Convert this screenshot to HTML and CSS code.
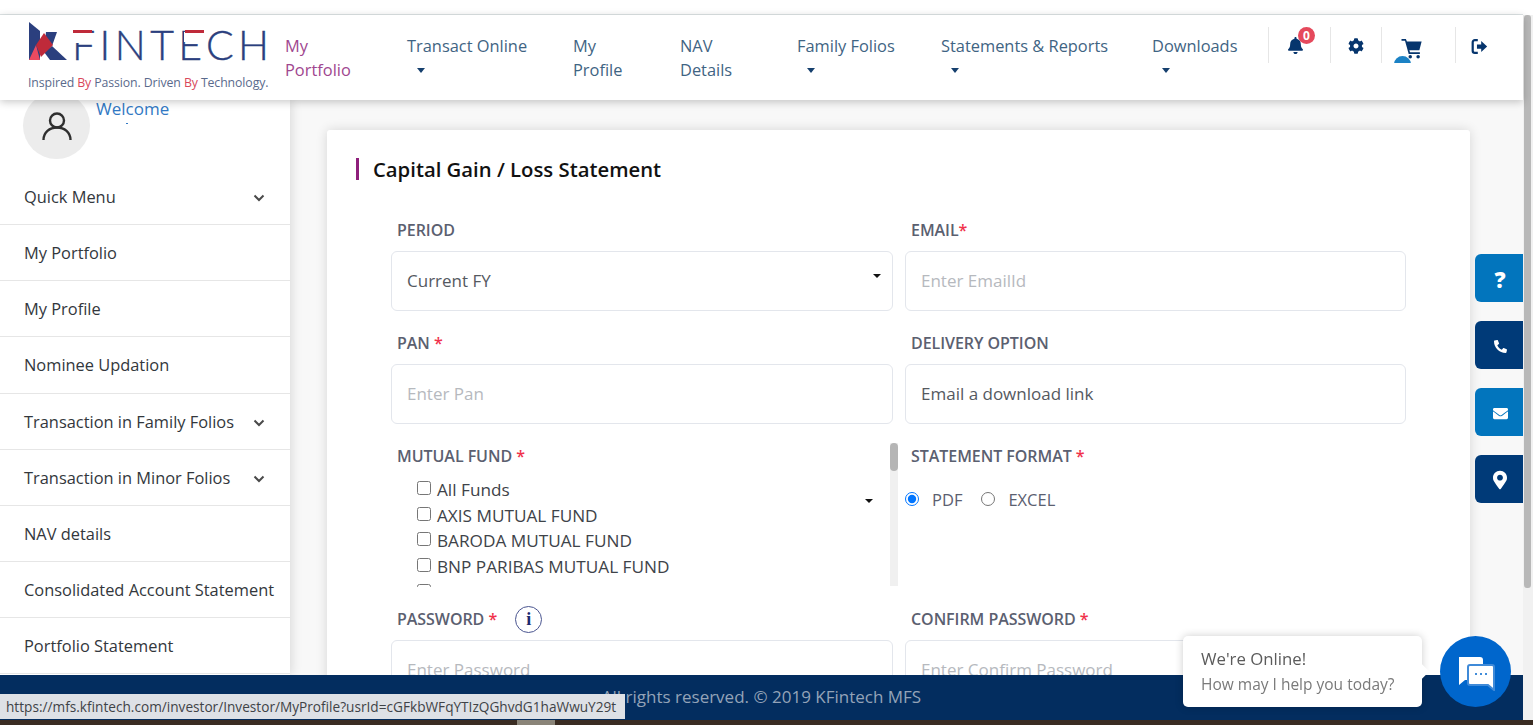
FILE: index.html
```html
<!DOCTYPE html>
<html lang="en">
<head>
    <meta charset="UTF-8">
    <title>Capital Gain / Loss Statement</title>
    <link rel="stylesheet" href="styles.css">
</head>
<body>
<div class="page">
    <div class="app">
        <div class="top-strip"></div>

        <header class="header">
            <div class="logo">
                <svg class="logo-mark" viewBox="0 0 245 42" width="245" height="42">
                    <polygon points="2,0 13,9 13,38 2,38" fill="#2b3f7e"/>
                    <polygon points="19,10 30,10 25,24 17,30" fill="#2b3f7e"/>
                    <polygon points="25,24 40,38 23,38 17,30" fill="#2b3f7e"/>
                    <polygon points="2,38 13,38 9,23" fill="#ec4a60"/>
                    <polygon points="17,11 26,23 14,35 9,23" fill="#bf2a3a"/>
                    <text class="logo-word" x="45" y="38" textLength="197" lengthAdjust="spacing">FINTECH</text>
                    <rect class="logo-mask" x="45" y="10" width="20" height="11"/>
                    <rect class="logo-mask" x="157" y="10" width="20" height="10"/>
                    <rect x="46" y="8" width="19" height="3" fill="#bf2a3a"/>
                    <rect x="158" y="8" width="19" height="3" fill="#bf2a3a"/>
                </svg>
                <div class="tagline">Inspired <em>By</em> Passion. Driven <em>By</em> Technology.</div>
            </div>

            <nav class="nav">
                <div class="nav-item nav-short active">My Portfolio</div>
                <div class="nav-item">Transact Online<span class="caret"></span></div>
                <div class="nav-item nav-short">My Profile</div>
                <div class="nav-item nav-short">NAV Details</div>
                <div class="nav-item">Family Folios<span class="caret"></span></div>
                <div class="nav-item">Statements &amp; Reports<span class="caret"></span></div>
                <div class="nav-item">Downloads<span class="caret"></span></div>
            </nav>

            <div class="tools">
                <div class="tool tool-bell">
                    <svg class="icon-bell" viewBox="0 0 448 512"><path d="M224 512c35.32 0 63.97-28.65 63.97-64H160.03c0 35.35 28.65 64 63.97 64zm215.39-149.71c-19.32-20.76-55.47-51.99-55.47-154.29 0-77.7-54.48-139.9-127.94-155.16V32c0-17.67-14.32-32-31.98-32s-31.98 14.33-31.98 32v20.84C118.56 68.1 64.08 130.3 64.08 208c0 102.3-36.15 133.53-55.47 154.29-6 6.45-8.66 14.16-8.61 21.71.11 16.4 12.98 32 32.1 32h383.8c19.12 0 32-15.6 32.1-32 .05-7.55-2.61-15.27-8.61-21.71z"/></svg>
                    <span class="bell-badge">0</span>
                </div>
                <div class="tool tool-cog">
                    <svg class="icon-cog" viewBox="0 0 512 512"><path d="M487.4 315.7l-42.6-24.6c4.3-23.2 4.3-47 0-70.2l42.6-24.6c4.9-2.8 7.1-8.6 5.5-14-11.1-35.6-30-67.8-54.7-94.6-3.8-4.1-10-5.1-14.8-2.3L380.8 110c-17.9-15.4-38.5-27.3-60.8-35.1V25.8c0-5.6-3.9-10.5-9.4-11.7-36.7-8.2-74.3-7.8-109.2 0-5.5 1.2-9.4 6.1-9.4 11.7V75c-22.2 7.9-42.8 19.8-60.8 35.1L88.7 85.5c-4.9-2.8-11-1.9-14.8 2.3-24.7 26.7-43.6 58.9-54.7 94.6-1.7 5.4.6 11.2 5.5 14L67.3 221c-4.3 23.2-4.3 47 0 70.2l-42.6 24.6c-4.9 2.8-7.1 8.6-5.5 14 11.1 35.6 30 67.8 54.7 94.6 3.8 4.1 10 5.1 14.8 2.3l42.6-24.6c17.9 15.4 38.5 27.3 60.8 35.1v49.2c0 5.6 3.9 10.5 9.4 11.7 36.7 8.2 74.3 7.8 109.2 0 5.5-1.2 9.4-6.1 9.4-11.7v-49.2c22.2-7.9 42.8-19.8 60.8-35.1l42.6 24.6c4.9 2.8 11 1.9 14.8-2.3 24.7-26.7 43.6-58.9 54.7-94.6 1.5-5.5-.7-11.3-5.6-14.1zM256 336c-44.1 0-80-35.9-80-80s35.9-80 80-80 80 35.9 80 80-35.9 80-80 80z"/></svg>
                </div>
                <div class="tool tool-cart">
                    <svg class="icon-cart" viewBox="0 0 24 24"><path d="M0 1h5l1.200 3H23l-2.600 10H9l.7 2.400H21v2H8.200L4 3H0z"/><circle cx="10" cy="21.500" r="2"/><circle cx="19" cy="21.500" r="2"/></svg>
                    <span class="cart-badge"></span>
                </div>
                <div class="tool tool-exit">
                    <svg class="icon-exit" viewBox="0 0 20 20"><path class="exit-line" d="M8 2.500H4.500A2.500 2.500 0 0 0 2 5v10a2.500 2.500 0 0 0 2.500 2.500H8"/><path d="M7 7.500h5V3.500l7 6.500-7 6.500v-4H7z"/></svg>
                </div>
            </div>
        </header>

        <div class="body">
            <aside class="sidebar">
                <div class="profile">
                    <div class="avatar">
                        <svg viewBox="0 0 32 32" width="32" height="32"><circle cx="16" cy="10.500" r="7"/><path d="M2.500 30c0-7.500 6-12.500 13.500-12.500S29.500 22.500 29.500 30"/></svg>
                    </div>
                    <div class="welcome">Welcome<span class="welcome-dot"></span></div>
                </div>
                <ul class="menu">
                    <li>Quick Menu<svg class="chev" viewBox="0 0 12 8"><path d="M1.500 1.500L6 6l4.500-4.500"/></svg></li>
                    <li>My Portfolio</li>
                    <li>My Profile</li>
                    <li>Nominee Updation</li>
                    <li>Transaction in Family Folios<svg class="chev" viewBox="0 0 12 8"><path d="M1.500 1.500L6 6l4.500-4.500"/></svg></li>
                    <li>Transaction in Minor Folios<svg class="chev" viewBox="0 0 12 8"><path d="M1.500 1.500L6 6l4.500-4.500"/></svg></li>
                    <li>NAV details</li>
                    <li>Consolidated Account Statement</li>
                    <li>Portfolio Statement</li>
                </ul>
            </aside>

            <main class="content">
                <section class="card">
                    <h2 class="card-title">Capital Gain / Loss Statement</h2>
                    <div class="form">
                        <div class="field">
                            <label class="label">PERIOD</label>
                            <div class="input select-box">Current FY<span class="caret caret-dark"></span></div>
                        </div>
                        <div class="field">
                            <label class="label">EMAIL<b>*</b></label>
                            <input class="input" type="text" placeholder="Enter EmailId">
                        </div>
                        <div class="field">
                            <label class="label">PAN <b>*</b></label>
                            <input class="input" type="text" placeholder="Enter Pan">
                        </div>
                        <div class="field">
                            <label class="label">DELIVERY OPTION</label>
                            <input class="input" type="text" value="Email a download link">
                        </div>
                        <div class="field fund-field">
                            <div class="fund-main">
                                <label class="label">MUTUAL FUND <b>*</b></label>
                                <div class="fund-row">
                                    <div class="fund-list">
                                        <label class="fund"><input type="checkbox">All Funds</label>
                                        <label class="fund"><input type="checkbox">AXIS MUTUAL FUND</label>
                                        <label class="fund"><input type="checkbox">BARODA MUTUAL FUND</label>
                                        <label class="fund"><input type="checkbox">BNP PARIBAS MUTUAL FUND</label>
                                        <label class="fund"><input type="checkbox">BOI AXA MUTUAL FUND</label>
                                    </div>
                                    <span class="caret caret-dark fund-caret"></span>
                                </div>
                            </div>
                            <div class="fund-scroll"><span></span></div>
                        </div>
                        <div class="field">
                            <label class="label">STATEMENT FORMAT <b>*</b></label>
                            <div class="radios">
                                <label class="radio"><input type="radio" name="fmt" checked>PDF</label>
                                <label class="radio"><input type="radio" name="fmt">EXCEL</label>
                            </div>
                        </div>
                        <div class="field">
                            <label class="label">PASSWORD <b>*</b><span class="info">i</span></label>
                            <input class="input" type="text" placeholder="Enter Password">
                        </div>
                        <div class="field">
                            <label class="label">CONFIRM PASSWORD <b>*</b></label>
                            <input class="input" type="text" placeholder="Enter Confirm Password">
                        </div>
                    </div>
                </section>
            </main>
        </div>

        <footer class="footer">All rights reserved. © 2019 KFintech MFS</footer>
    </div>

    <div class="scrollbar"><span></span></div>
</div>
<div class="bottom-strip"></div>

<div class="side-links">
    <a class="side-link light"><span class="side-q">?</span></a>
    <a class="side-link">
        <svg viewBox="0 0 512 512" width="13" height="13"><path transform="translate(512 0) scale(-1 1)" d="M493.400 24.600l-104-24c-11.300-2.600-22.900 3.300-27.500 13.900l-48 112c-4.200 9.800-1.400 21.300 6.900 28l60.600 49.600c-36 76.700-98.900 140.500-177.200 177.200l-49.600-60.600c-6.800-8.300-18.200-11.100-28-6.900l-112 48C3.900 366.500-2 378.100.6 389.400l24 104C27.100 504.200 36.700 512 48 512c256.100 0 464-207.500 464-464 0-11.200-7.700-20.900-18.600-23.400z"/></svg>
    </a>
    <a class="side-link light">
        <svg viewBox="0 0 512 512" width="15" height="15"><path d="M502.300 190.800c3.900-3.100 9.700-.2 9.700 4.700V400c0 26.500-21.500 48-48 48H48c-26.500 0-48-21.500-48-48V195.600c0-5 5.700-7.800 9.700-4.700 22.400 17.400 52.100 39.500 154.100 113.600 21.100 15.400 56.700 47.800 92.200 47.600 35.700.3 72-32.800 92.300-47.600 102-74.100 131.600-96.300 154-113.700zM256 320c23.200.4 56.600-29.200 73.400-41.400 132.700-96.300 142.800-104.700 173.400-128.700 5.800-4.500 9.200-11.500 9.200-18.900v-19c0-26.500-21.500-48-48-48H48C21.500 64 0 85.500 0 112v19c0 7.400 3.400 14.300 9.200 18.900 30.600 23.900 40.700 32.400 173.400 128.700 16.800 12.200 50.200 41.800 73.400 41.400z"/></svg>
    </a>
    <a class="side-link">
        <svg viewBox="0 0 384 512" width="14" height="20"><path d="M172.268 501.670C26.970 291.031 0 269.413 0 192 0 85.961 85.961 0 192 0s192 85.961 192 192c0 77.413-26.970 99.031-172.268 309.670-9.535 13.774-29.930 13.773-39.464 0zM192 272c44.183 0 80-35.817 80-80s-35.817-80-80-80-80 35.817-80 80 35.817 80 80 80z"/></svg>
    </a>
</div>

<div class="status-tip">https://mfs.kfintech.com/investor/Investor/MyProfile?usrId=cGFkbWFqYTIzQGhvdG1haWwuY29t</div>

<div class="chat">
    <div class="chat-bubble">
        <div class="chat-title">We're Online!</div>
        <div class="chat-sub">How may I help you today?</div>
    </div>
    <div class="chat-btn">
        <svg viewBox="0 0 40 36" width="40" height="36">
            <path class="bubble-back" d="M3 2h21a3 3 0 0 1 3 3v17a3 3 0 0 1-3 3H9l-6 5z"/>
            <path class="bubble-front" d="M14 10h22a2 2 0 0 1 2 2v16l0 7-6-5H14a2 2 0 0 1-2-2V12a2 2 0 0 1 2-2z"/>
            <circle cx="20" cy="19" r="1" fill="#0066cc"/><circle cx="25" cy="19" r="1" fill="#0066cc"/><circle cx="30" cy="19" r="1" fill="#0066cc"/>
        </svg>
    </div>
</div>
</body>
</html>
```

FILE: styles.css
```css
* {
    box-sizing: border-box;
}
html, body {
    margin: 0;
    height: 725px;
    overflow: hidden;
}
body {
    font-family: "Open Sans", "Noto Sans", sans-serif;
    font-size: 16px;
    color: #3c4148;
    background-color: #fff;
}
.page {
    display: flex;
    height: 720px;
}
.app {
    flex: 1;
    min-width: 0;
    display: flex;
    flex-direction: column;
}
.top-strip {
    height: 15px;
    background-color: #fff;
    border-bottom: 1px solid #dfe5e6;
}

/* header */
.header {
    position: relative;
    z-index: 5;
    height: 85px;
    flex: none;
    display: flex;
    background-color: #fff;
    box-shadow: 0 2px 8px rgba(0, 0, 0, 0.22);
}
.logo {
    width: 285px;
    flex: none;
    padding: 7px 0 0 27px;
}
.logo-mark {
    display: block;
}
.logo-word {
    font-family: "Lato", sans-serif;
    font-size: 41px;
    font-weight: 300;
    fill: #2b3f7e;
    stroke: #2b3f7e;
    stroke-width: 0.4px;
}
.logo-mask {
    fill: #fff;
}
.tagline {
    margin: 11px 0 0 1px;
    font-size: 12.3px;
    line-height: 16px;
    letter-spacing: -0.1px;
    color: #5a6a8c;
    white-space: nowrap;
}
.tagline em {
    font-style: normal;
    color: #d9485a;
}
.nav {
    flex: none;
    display: grid;
    grid-template-columns: 122px 166px 107px 117px 144px 211px 116px;
    padding-top: 19px;
}
.nav-item {
    font-size: 16.4px;
    line-height: 24px;
    color: #3f6483;
}
.nav-short {
    padding-right: 40px;
}
.nav-item.active {
    color: #a0468f;
}
.caret {
    display: block;
    width: 0;
    height: 0;
    margin: 10px 0 0 10px;
    border-left: 4.5px solid transparent;
    border-right: 4.5px solid transparent;
    border-top: 5px solid #16406e;
}
.tools {
    display: flex;
    padding-top: 12px;
}
.tool {
    position: relative;
    height: 36px;
    border-left: 1px solid #e6e6e6;
}
.tool-bell { width: 62px; }
.tool-cog { width: 51px; }
.tool-cart { width: 74px; overflow: hidden; }
.tool-exit { width: 60px; }
.tool svg {
    fill: #06356d;
    display: block;
}
.icon-bell {
    width: 15px;
    height: 17px;
    margin: 10px 0 0 19px;
}
.bell-badge {
    position: absolute;
    top: 0;
    left: 29px;
    width: 17px;
    height: 17px;
    border-radius: 50%;
    background-color: #e5495c;
    color: #fff;
    font-size: 12px;
    font-weight: 700;
    line-height: 17px;
    text-align: center;
}
.icon-cog {
    width: 16px;
    height: 16px;
    margin: 11px 0 0 17px;
}
.icon-cart {
    width: 22px;
    height: 21px;
    margin: 11px 0 0 19px;
}
.cart-badge {
    position: absolute;
    left: 12px;
    top: 29px;
    width: 17px;
    height: 17px;
    border-radius: 50%;
    background-color: #1b82c5;
}
.icon-exit {
    width: 17px;
    height: 17px;
    margin: 11px 0 0 15px;
}
.tool .exit-line {
    fill: none;
    stroke: #06356d;
    stroke-width: 2.6;
}

/* sidebar */
.body {
    flex: 1;
    min-height: 0;
    display: flex;
    overflow: hidden;
    background-color: #f8f8f8;
}
.sidebar {
    width: 290px;
    flex: none;
    background-color: #fff;
    box-shadow: 2px 0 10px rgba(0, 0, 0, 0.12);
}
.profile {
    display: flex;
    height: 77px;
    margin-top: -8px;
    padding-left: 23px;
}
.avatar {
    width: 67px;
    height: 67px;
    border-radius: 50%;
    background-color: #ececec;
    display: flex;
    align-items: center;
    justify-content: center;
}
.avatar svg {
    fill: none;
    stroke: #2f2f2f;
    stroke-width: 2.4;
}
.welcome {
    margin: 5px 0 0 6px;
    font-size: 17px;
    line-height: 23px;
    color: #3279c4;
}
.welcome-dot {
    display: block;
    width: 2px;
    height: 1px;
    margin: 3px 0 0 30px;
    background-color: #3279c4;
}
.menu {
    list-style: none;
    margin: 0;
    padding: 0;
}
.menu li {
    height: 56.15px;
    display: flex;
    align-items: center;
    justify-content: space-between;
    padding: 0 25px 0 24px;
    border-bottom: 1px solid #e6e6e6;
    font-size: 16.4px;
    color: #33373c;
    white-space: nowrap;
}
.chev {
    width: 12px;
    height: 8px;
    fill: none;
    stroke: #4a4a4a;
    stroke-width: 2;
    margin-top: 3px;
}

/* statement card */
.content {
    flex: 1;
    min-width: 0;
    padding: 30px 53px 0 37px;
}
.card {
    height: 560px;
    padding: 28px 64px 0;
    background-color: #fff;
    box-shadow: 0 0 12px rgba(0, 0, 0, 0.14);
    border-radius: 3px;
}
.card-title {
    margin: 0 0 39px -35px;
    padding-left: 14px;
    border-left: 3px solid #8e1f7b;
    font-size: 20.3px;
    font-weight: 600;
    line-height: 22px;
    color: #111;
}
.form {
    display: grid;
    grid-template-columns: 502px 501px;
    column-gap: 12px;
    row-gap: 21px;
    align-items: start;
}
.label {
    display: block;
    height: 22px;
    margin-bottom: 10px;
    padding-left: 6px;
    font-size: 16px;
    font-weight: 600;
    line-height: 22px;
    letter-spacing: -0.05px;
    color: #5b6070;
}
.label b {
    color: #f0324b;
    font-weight: 600;
}
.input {
    display: block;
    width: 100%;
    height: 60px;
    padding: 0 15px 2px;
    border: 1px solid #e3e6ec;
    border-radius: 6px;
    background-color: #fff;
    font-family: inherit;
    font-size: 17px;
    color: #55595f;
}
.input::placeholder {
    color: #b6b9be;
    opacity: 1;
}
.select-box {
    position: relative;
    line-height: 58px;
}
.caret-dark {
    border-top-color: #111;
    border-left-width: 4px;
    border-right-width: 4px;
    border-top-width: 4px;
    margin: 0;
}
.select-box .caret-dark {
    position: absolute;
    top: 22px;
    right: 11px;
}
.fund-field {
    display: flex;
    height: 142px;
    margin-right: -5px;
}
.fund-main {
    flex: 1;
    min-width: 0;
}
.fund-row {
    display: flex;
    justify-content: space-between;
    height: 110px;
    padding: 0 17px 0 26px;
    overflow: hidden;
}
.fund {
    display: flex;
    align-items: center;
    height: 25.6px;
    font-size: 17.2px;
    color: #3e4349;
    white-space: nowrap;
}
.fund input {
    width: 14px;
    height: 14px;
    margin: -3px 6px 0 0;
}
.fund-caret {
    flex: none;
    margin-top: 22px;
}
.fund-scroll {
    width: 8px;
    flex: none;
    margin-top: -2px;
    height: 143px;
    background-color: #f0f0f0;
}
.fund-scroll span {
    display: block;
    height: 28px;
    border-radius: 4px;
    background-color: #b5b5b5;
}
.radios {
    display: flex;
    align-items: center;
    gap: 19px;
    height: 24px;
    margin-top: 20px;
}
.radio {
    display: flex;
    align-items: center;
    font-size: 16.5px;
    font-weight: 500;
    color: #5b6070;
}
.radio input {
    margin: 0 13px 0 0;
    width: 14px;
    height: 14px;
}
.info {
    display: inline-block;
    width: 27px;
    height: 27px;
    margin: -2.5px 0 0 18px;
    vertical-align: top;
    border: 1.5px solid #4a5590;
    border-radius: 50%;
    font-family: "Liberation Serif", serif;
    font-weight: 700;
    font-size: 18px;
    line-height: 24px;
    text-align: center;
    color: #1d2a6e;
}

/* footer */
.footer {
    height: 45px;
    flex: none;
    background-color: #032d5f;
    color: #93a3b8;
    font-size: 17px;
    line-height: 44px;
    text-align: center;
}
.bottom-strip {
    height: 5px;
    background: linear-gradient(to right, #3a2c22 517px, #8a8478 517px, #8a8478 555px, #3a2c22 555px);
}
.scrollbar {
    width: 10px;
    flex: none;
    margin-top: 15px;
    padding: 0 2px 0 1px;
    background-color: #f1f1f1;
}
.scrollbar span {
    display: block;
    height: 573px;
    border-radius: 3px;
    background-color: #b8b8b8;
}

/* things that float over the page */
.side-links {
    position: fixed;
    top: 254px;
    right: 10px;
    display: flex;
    flex-direction: column;
    gap: 19px;
    z-index: 6;
}
.side-link {
    width: 48px;
    height: 48px;
    display: flex;
    align-items: center;
    justify-content: center;
    padding: 2px 0 0 2px;
    border-radius: 6px 0 0 6px;
    background-color: #003a78;
}
.side-link.light {
    background-color: #0275bd;
}
.side-link svg {
    fill: #fff;
}
.side-q {
    color: #fff;
    font-size: 22px;
    font-weight: 800;
}
.status-tip {
    position: fixed;
    left: 0;
    top: 694px;
    width: 625px;
    height: 25px;
    padding-left: 6px;
    background-color: #dee1e6;
    color: #3f4347;
    font-size: 13.65px;
    line-height: 25px;
    white-space: nowrap;
    overflow: hidden;
    z-index: 8;
}
.chat {
    position: fixed;
    top: 636px;
    left: 1183px;
    display: flex;
    align-items: center;
    gap: 18px;
    z-index: 7;
}
.chat-bubble {
    position: relative;
    width: 239px;
    height: 71px;
    padding: 12px 18px;
    border-radius: 5px;
    background-color: #fff;
    box-shadow: 0 0 8px rgba(0, 0, 0, 0.2);
}
.chat-bubble::after {
    content: "";
    position: absolute;
    top: 30px;
    right: -5px;
    width: 11px;
    height: 11px;
    background-color: #fff;
    transform: rotate(45deg);
}
.chat-title {
    font-size: 16.8px;
    line-height: 22px;
    color: #5b5b5b;
}
.chat-sub {
    margin-top: 4px;
    font-size: 15.5px;
    line-height: 20px;
    color: #7a7a7a;
}
.chat-btn {
    width: 71px;
    height: 71px;
    flex: none;
    display: flex;
    align-items: center;
    justify-content: center;
    padding-top: 3px;
    border-radius: 50%;
    background-color: #0066cc;
}
.bubble-back {
    fill: #fff;
}
.bubble-front {
    fill: #fff;
    stroke: #3f8ad8;
    stroke-width: 2;
}
```
